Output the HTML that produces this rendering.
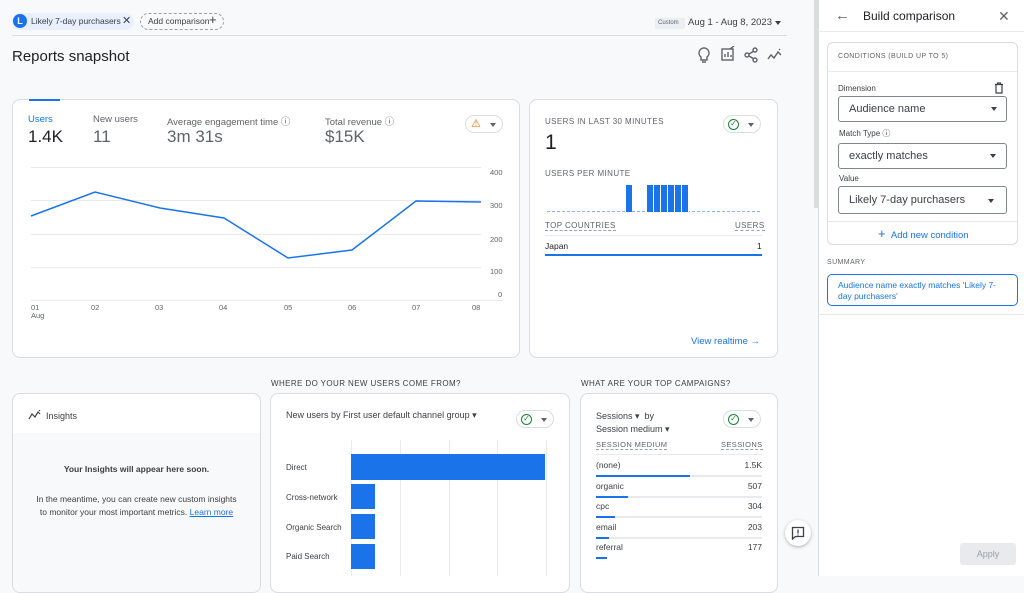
<!DOCTYPE html>
<html><head><meta charset="utf-8"><style>
*{box-sizing:border-box;margin:0;padding:0}
body{width:1024px;height:576px;overflow:hidden;background:#f8f9fa;font-family:"Liberation Sans",sans-serif;color:#202124;position:relative}
.a{position:absolute;white-space:nowrap}
.card{position:absolute;background:#fff;border:1px solid #dadce0;border-radius:8px}
.sm{font-size:9px;color:#5f6368;letter-spacing:.4px}
.pill{position:absolute;border:1px solid #dadce0;border-radius:12px;background:#fff}
.sel{position:absolute;left:838px;width:169px;border:1px solid #80868b;border-radius:3px;font-size:11px;color:#3c4043;padding-left:10px}
.caret{position:absolute;width:0;height:0;border-left:3.5px solid transparent;border-right:3.5px solid transparent;border-top:4px solid #3c4043}
</style></head><body>
<!-- top -->
<div class="a" style="left:12px;top:13px;width:122px;height:17px;background:#e8f0fe;border-radius:9px"></div>
<div class="a" style="left:13px;top:14px;width:14px;height:14px;border-radius:50%;background:#1a73e8;color:#fff;font-size:9px;font-weight:bold;text-align:center;line-height:14px">L</div>
<div class="a" style="left:31px;top:16px;font-size:8.5px;color:#3c4043">Likely 7-day purchasers</div>
<div class="a" style="left:122px;top:14px;font-size:11px;color:#3c4043">✕</div>
<div class="a" style="left:140px;top:13px;width:84px;height:17px;border:1px dashed #9aa0a6;border-radius:9px"></div>
<div class="a" style="left:148px;top:16px;font-size:8.5px;color:#3c4043">Add comparison</div>
<div class="a" style="left:209px;top:12px;font-size:13px;color:#3c4043">+</div>
<div class="a" style="left:12px;top:35px;width:775px;border-top:1px solid #dadce0"></div>
<div class="a" style="left:655px;top:18px;width:30px;height:11px;background:#eceff1;font-size:6px;color:#5f6368;padding:2px 0 0 3px">Custom</div>
<div class="a" style="left:688px;top:17px;font-size:9.5px;color:#3c4043">Aug 1 - Aug 8, 2023</div>
<div class="caret" style="left:775px;top:21px"></div>
<div class="a" style="left:12px;top:48px;font-size:15px">Reports snapshot</div>
<svg class="a" style="left:695px;top:46px" width="90" height="18" fill="none" stroke="#5f6368" stroke-width="1.4">
<path d="M9 2a5 5 0 0 0-3 9v3h6v-3a5 5 0 0 0-3-9zM7 16h4"/>
<rect x="27" y="3" width="11" height="11"/><path d="M30 11v-3M33 11v-5M36 11v-2M35 3l4-3"/>
<circle cx="60" cy="4" r="2"/><circle cx="52" cy="9" r="2"/><circle cx="60" cy="14" r="2"/><path d="M54 8l5-3M54 10l5 3"/>
<path d="M73 13l3-4 3 3 4-6 3 3M84 4l1-1"/>
</svg>
<!-- main card -->
<div class="card" style="left:12px;top:99px;width:508px;height:259px"></div>
<div class="a" style="left:29px;top:99px;width:31px;height:2px;background:#1a73e8"></div>
<div class="a" style="left:28px;top:114px;font-size:9.5px;color:#1a73e8">Users</div>
<div class="a" style="left:28px;top:127px;font-size:17px">1.4K</div>
<div class="a" style="left:93px;top:114px;font-size:9.5px;color:#5f6368">New users</div>
<div class="a" style="left:93px;top:127px;font-size:17px;color:#5f6368">11</div>
<div class="a" style="left:167px;top:114px;font-size:9.5px;color:#5f6368">Average engagement time ⓘ</div>
<div class="a" style="left:167px;top:127px;font-size:17px;color:#5f6368">3m 31s</div>
<div class="a" style="left:325px;top:114px;font-size:9.5px;color:#5f6368">Total revenue ⓘ</div>
<div class="a" style="left:325px;top:127px;font-size:17px;color:#5f6368">$15K</div>
<div class="pill" style="left:465px;top:115px;width:38px;height:18px"><span style="position:absolute;left:5px;top:1px;color:#e8710a;font-size:11px">⚠</span><div class="caret" style="left:24px;top:7px;border-top-color:#5f6368"></div></div>
<svg class="a" style="left:0;top:0" width="520" height="330">
<g stroke="#e8eaed" stroke-width="1"><path d="M31 167.5H481M31 200.5H481M31 234.5H481M31 267.5H481M31 300.5H503"/></g>
<polyline fill="none" stroke="#1a73e8" stroke-width="1.5" points="31,216 95,192 160,208 224,218 288,258 352,250 416,201 481,202"/>
<g font-size="7.5" fill="#5f6368" font-family="Liberation Sans"><text x="490" y="175">400</text><text x="490" y="208">300</text><text x="490" y="242">200</text><text x="490" y="274">100</text><text x="498" y="297">0</text>
<text x="31" y="310">01</text><text x="31" y="318">Aug</text><text x="91" y="310">02</text><text x="155" y="310">03</text><text x="219" y="310">04</text><text x="284" y="310">05</text><text x="348" y="310">06</text><text x="412" y="310">07</text><text x="472" y="310">08</text></g>
</svg>
<!-- realtime card -->
<div class="card" style="left:529px;top:99px;width:249px;height:259px"></div>
<div class="a sm" style="left:545px;top:117px;font-size:8px">USERS IN LAST 30 MINUTES</div>
<div class="a" style="left:545px;top:131px;font-size:21px">1</div>
<div class="pill" style="left:723px;top:115px;width:38px;height:18px"><span style="position:absolute;left:4px;top:3px;width:11px;height:11px;border:1.5px solid #188038;border-radius:50%;color:#188038;font-size:8px;line-height:8px;text-align:center">✓</span><div class="caret" style="left:24px;top:7px;border-top-color:#5f6368"></div></div>
<div class="a sm" style="left:545px;top:169px;font-size:8px">USERS PER MINUTE</div>
<div class="a" style="left:547px;top:211px;width:213px;border-top:1px dashed #8ab4f8"></div>
<div class="a" style="left:626px;top:185px;width:6px;height:27px;background:#1a73e8"></div>
<div class="a" style="left:647px;top:185px;width:42px;height:27px;background:repeating-linear-gradient(90deg,#1a73e8 0 6px,#fff 6px 7px)"></div>
<div class="a sm" style="left:545px;top:221px;font-size:8px;border-bottom:1px dashed #9aa0a6">TOP COUNTRIES</div>
<div class="a sm" style="left:735px;top:221px;font-size:8px;border-bottom:1px dashed #9aa0a6">USERS</div>
<div class="a" style="left:545px;top:235px;width:217px;border-top:1px solid #e8eaed"></div>
<div class="a" style="left:545px;top:241px;font-size:8.5px">Japan</div>
<div class="a" style="left:757px;top:241px;font-size:8.5px">1</div>
<div class="a" style="left:545px;top:254px;width:217px;height:2px;background:#1a73e8"></div>
<div class="a" style="left:691px;top:336px;font-size:9.5px;color:#1a73e8">View realtime →</div>
<!-- bottom -->
<div class="a sm" style="left:271px;top:379px;font-size:8px;color:#3c4043">WHERE DO YOUR NEW USERS COME FROM?</div>
<div class="a sm" style="left:581px;top:379px;font-size:8px;color:#3c4043">WHAT ARE YOUR TOP CAMPAIGNS?</div>
<div class="card" style="left:12px;top:393px;width:249px;height:200px;overflow:hidden"><div style="position:absolute;top:39px;left:0;right:0;bottom:0;background:#f8f9fa"></div></div>
<svg class="a" style="left:28px;top:410px" width="14" height="10" fill="none" stroke="#3c4043" stroke-width="1.2"><path d="M1 9l3-5 3 3 3-5 2 2M11 1l1-1"/></svg>
<div class="a" style="left:46px;top:411px;font-size:9px;color:#3c4043">Insights</div>
<div class="a" style="left:12px;top:464px;width:249px;text-align:center;font-size:8.5px;font-weight:bold;color:#3c4043">Your Insights will appear here soon.</div>
<div class="a" style="left:12px;top:493px;width:249px;text-align:center;font-size:8.5px;color:#3c4043;line-height:13px">In the meantime, you can create new custom insights<br>to monitor your most important metrics. <span style="color:#1a73e8;text-decoration:underline">Learn more</span></div>
<div class="card" style="left:270px;top:393px;width:300px;height:200px"></div>
<div class="a" style="left:286px;top:410px;font-size:9px;color:#3c4043">New users by First user default channel group ▾</div>
<div class="pill" style="left:516px;top:410px;width:38px;height:18px"><span style="position:absolute;left:4px;top:3px;width:11px;height:11px;border:1.5px solid #188038;border-radius:50%;color:#188038;font-size:8px;line-height:8px;text-align:center">✓</span><div class="caret" style="left:24px;top:7px;border-top-color:#5f6368"></div></div>
<svg class="a" style="left:270px;top:430px" width="300" height="146"><g stroke="#e8eaed"><path d="M81.5 10V146M130.5 10V146M179.5 10V146M227.5 10V146M276.5 10V146"/></g>
<rect x="81" y="24" width="194" height="26" fill="#1a73e8"/><rect x="81" y="54" width="24" height="25" fill="#1a73e8"/><rect x="81" y="84" width="24" height="25" fill="#1a73e8"/><rect x="81" y="114" width="24" height="25" fill="#1a73e8"/>
<g font-size="8" fill="#3c4043" font-family="Liberation Sans"><text x="16" y="40">Direct</text><text x="16" y="70">Cross-network</text><text x="16" y="100">Organic Search</text><text x="16" y="129">Paid Search</text></g></svg>
<div class="card" style="left:580px;top:393px;width:198px;height:200px"></div>
<div class="a" style="left:596px;top:410px;font-size:9px;color:#3c4043;line-height:13px">Sessions ▾ &nbsp;by<br>Session medium ▾</div>
<div class="pill" style="left:723px;top:410px;width:38px;height:18px"><span style="position:absolute;left:4px;top:3px;width:11px;height:11px;border:1.5px solid #188038;border-radius:50%;color:#188038;font-size:8px;line-height:8px;text-align:center">✓</span><div class="caret" style="left:24px;top:7px;border-top-color:#5f6368"></div></div>
<div class="a sm" style="left:596px;top:440px;font-size:7.5px;border-bottom:1px dashed #9aa0a6">SESSION MEDIUM</div><div class="a sm" style="left:721px;top:440px;font-size:7.5px;border-bottom:1px dashed #9aa0a6">SESSIONS</div>
<div class="a" style="left:596px;top:454px;width:166px;border-top:1px solid #e8eaed"></div>
<div class="a" style="left:596px;top:455px;width:166px;font-size:8.5px;line-height:20.6px;color:#3c4043">
<div style="display:flex;justify-content:space-between">(none)<span>1.5K</span></div>
<div style="display:flex;justify-content:space-between">organic<span>507</span></div>
<div style="display:flex;justify-content:space-between">cpc<span>304</span></div>
<div style="display:flex;justify-content:space-between">email<span>203</span></div>
<div style="display:flex;justify-content:space-between">referral<span>177</span></div></div>
<div class="a" style="left:596px;top:475px;width:166px;height:2px;background:#e8eaed"></div>
<div class="a" style="left:596px;top:496px;width:166px;height:2px;background:#e8eaed"></div>
<div class="a" style="left:596px;top:516px;width:166px;height:2px;background:#e8eaed"></div>
<div class="a" style="left:596px;top:537px;width:166px;height:2px;background:#e8eaed"></div>
<div class="a" style="left:596px;top:475px;width:94px;height:2px;background:#1a73e8"></div>
<div class="a" style="left:596px;top:496px;width:32px;height:2px;background:#1a73e8"></div>
<div class="a" style="left:596px;top:516px;width:19px;height:2px;background:#1a73e8"></div>
<div class="a" style="left:596px;top:537px;width:13px;height:2px;background:#1a73e8"></div>
<div class="a" style="left:596px;top:557px;width:11px;height:2px;background:#1a73e8"></div>
<div class="a" style="left:785px;top:520px;width:26px;height:26px;border-radius:50%;background:#fff;box-shadow:0 1px 3px rgba(0,0,0,.3)"></div>
<svg class="a" style="left:791px;top:526px" width="14" height="14" fill="none" stroke="#3c4043" stroke-width="1.3"><path d="M1.5 1.5h11v9h-8l-3 2.5z"/><path d="M7 3.5v4M7 8.5v1"/></svg>
<!-- right panel -->
<div class="a" style="left:814px;top:0;width:4px;height:208px;background:#dadce0"></div>
<div class="a" style="left:818px;top:0;width:206px;height:576px;background:#fff;border-left:1px solid #dadce0"></div>
<div class="a" style="left:835px;top:7px;font-size:15px;color:#5f6368">←</div>
<div class="a" style="left:863px;top:9px;font-size:12px">Build comparison</div>
<div class="a" style="left:998px;top:8px;font-size:14px;color:#5f6368">✕</div>
<div class="a" style="left:818px;top:31px;width:206px;border-top:1px solid #e8eaed"></div>
<div class="a" style="left:827px;top:42px;width:191px;height:203px;border:1px solid #dadce0;border-radius:6px"></div>
<div class="a" style="left:828px;top:71px;width:189px;border-top:1px solid #e8eaed"></div>
<div class="a sm" style="left:838px;top:53px;font-size:7px">CONDITIONS (BUILD UP TO 5)</div>
<div class="a" style="left:838px;top:84px;font-size:8px;color:#3c4043">Dimension</div>
<svg class="a" style="left:994px;top:82px" width="10" height="12" fill="none" stroke="#3c4043" stroke-width="1.2"><path d="M1 2.5h8M3.5 2.5V1h3v1.5M2 2.5v8.5h6V2.5"/></svg>
<div class="sel" style="top:96px;height:26px;line-height:24px">Audience name</div><div class="caret" style="left:991px;top:107px"></div>
<div class="a" style="left:839px;top:128px;font-size:8px;color:#3c4043">Match Type ⓘ</div>
<div class="sel" style="top:143px;height:26px;line-height:24px">exactly matches</div><div class="caret" style="left:990px;top:154px"></div>
<div class="a" style="left:839px;top:174px;font-size:8px;color:#3c4043">Value</div>
<div class="sel" style="top:186px;height:28px;line-height:26px">Likely 7-day purchasers</div><div class="caret" style="left:988px;top:199px"></div>
<div class="a" style="left:828px;top:221px;width:189px;border-top:1px solid #e8eaed"></div>
<div class="a" style="left:878px;top:226px;font-size:9.5px;color:#1a73e8"><span style="font-size:13px">+</span>&nbsp;&nbsp;Add new condition</div>
<div class="a sm" style="left:827px;top:259px;font-size:7px">SUMMARY</div>
<div class="a" style="left:827px;top:274px;width:191px;height:32px;border:1px solid #1a73e8;border-radius:5px;font-size:8.5px;color:#1a73e8;padding:5px 10px;line-height:11px;white-space:normal">Audience name exactly matches 'Likely 7-day purchasers'</div>
<div class="a" style="left:818px;top:314px;width:206px;border-top:1px solid #e8eaed"></div>
<div class="a" style="left:960px;top:543px;width:56px;height:22px;background:#e8eaed;border-radius:3px;font-size:9px;color:#9aa0a6;text-align:center;line-height:22px">Apply</div>
</body></html>
